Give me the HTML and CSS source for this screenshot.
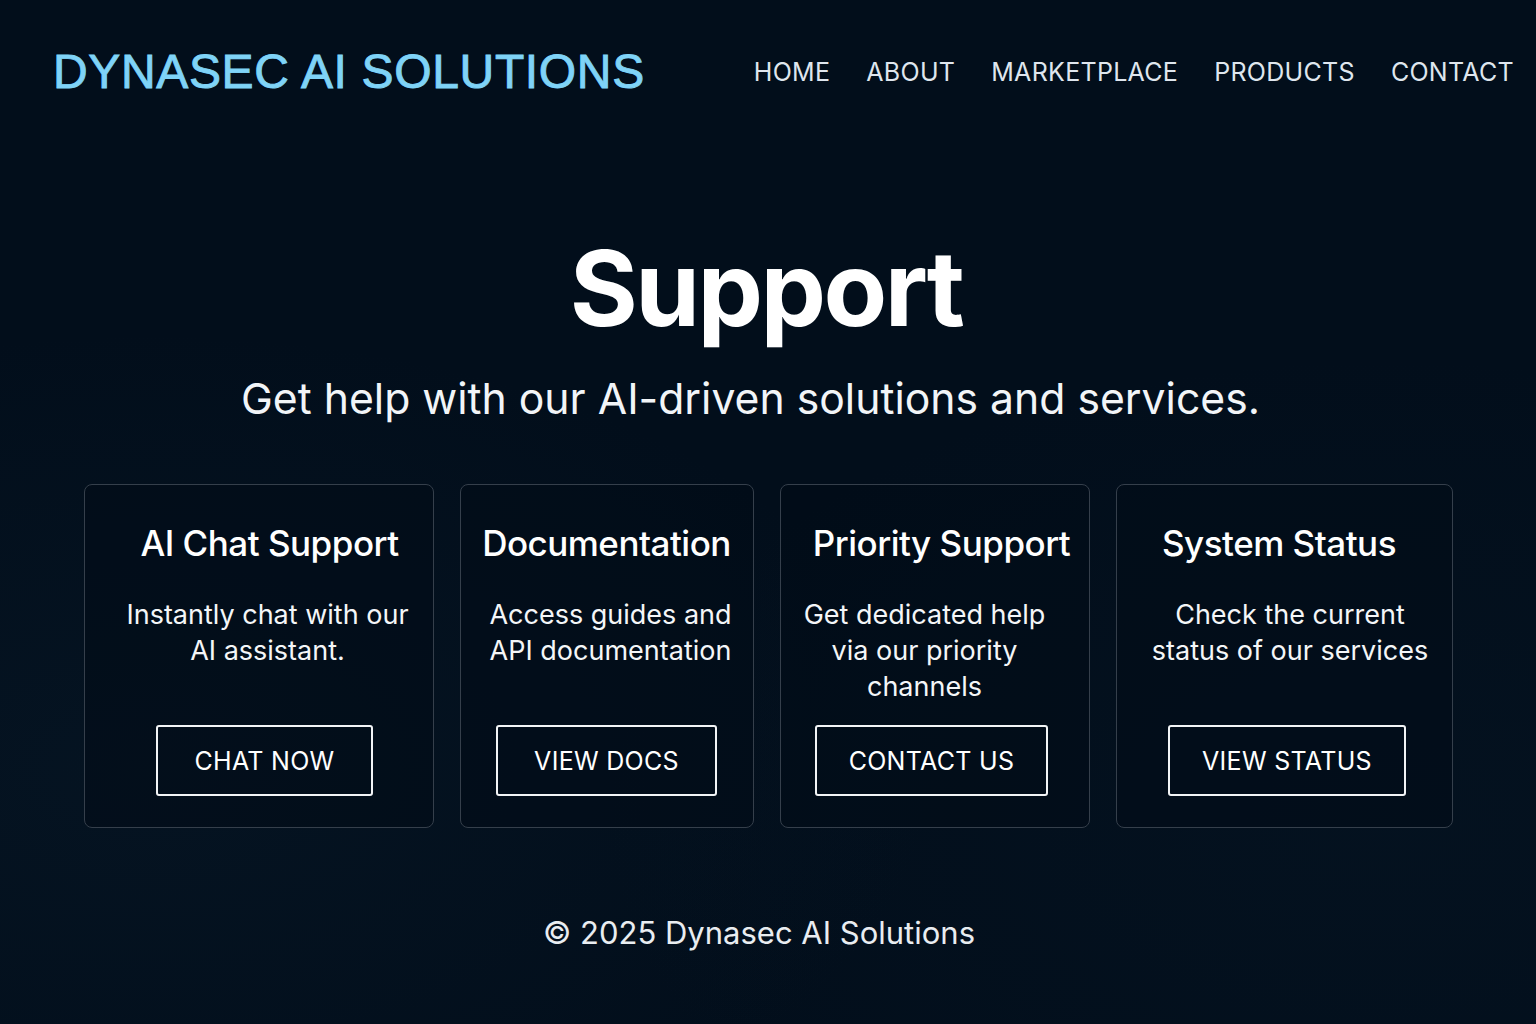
FILE: index.html
```html
<!DOCTYPE html>
<html lang="en">
<head>
<meta charset="utf-8">
<title>Support - Dynasec AI Solutions</title>
<link rel="stylesheet" href="styles.css">
</head>
<body>
<div class="page">
  <header class="site-header">
    <div class="logo">DYNASEC AI SOLUTIONS</div>
    <nav class="nav">
      <a href="#" class="nav-link">HOME</a>
      <a href="#" class="nav-link">ABOUT</a>
      <a href="#" class="nav-link">MARKETPLACE</a>
      <a href="#" class="nav-link">PRODUCTS</a>
      <a href="#" class="nav-link">CONTACT</a>
    </nav>
  </header>

  <main class="main">
    <section class="hero">
      <h1 class="hero-title">Support</h1>
      <p class="hero-sub">Get help with our AI-driven solutions and services.</p>
    </section>

    <section class="cards">
      <div class="card card-chat">
        <h2 class="card-title">AI Chat Support</h2>
        <p class="card-text">Instantly chat with our<br>AI assistant.</p>
        <a href="#" class="btn">CHAT NOW</a>
      </div>
      <div class="card card-docs">
        <h2 class="card-title">Documentation</h2>
        <p class="card-text">Access guides and<br>API documentation</p>
        <a href="#" class="btn">VIEW DOCS</a>
      </div>
      <div class="card card-priority">
        <h2 class="card-title">Priority Support</h2>
        <p class="card-text">Get dedicated help<br>via our priority<br>channels</p>
        <a href="#" class="btn">CONTACT US</a>
      </div>
      <div class="card card-status">
        <h2 class="card-title">System Status</h2>
        <p class="card-text">Check the current<br>status of our services</p>
        <a href="#" class="btn">VIEW STATUS</a>
      </div>
    </section>
  </main>

  <footer class="footer">© 2025 Dynasec AI Solutions</footer>
</div>
</body>
</html>
```
FILE: styles.css
```css
html, body {
  margin: 0;
  padding: 0;
}
body {
  background: #020e1b;
  color: #ffffff;
  font-family: Inter, "Noto Sans", sans-serif;
  min-height: 1024px;
  background-image:
    radial-gradient(ellipse at 10% 75%, rgba(16, 40, 58, 0.22), transparent 40%),
    radial-gradient(ellipse at 90% 80%, rgba(16, 40, 58, 0.14), transparent 40%);
}
.page {
  width: 1536px;
  height: 1024px;
  display: flex;
  flex-direction: column;
}
.site-header {
  display: flex;
  align-items: center;
  justify-content: space-between;
  padding: 44px 22px 0 53px;
  height: 56px;
}
.logo {
  font-family: "Liberation Sans", Arial, sans-serif;
  font-size: 48px;
  font-weight: 400;
  letter-spacing: 0.65px;
  color: #7fd3f7;
  line-height: 1;
  -webkit-text-stroke: 0.9px #7fd3f7;
}
.nav {
  display: flex;
  gap: 36px;
  align-items: center;
}
.nav-link {
  color: #dfe6ee;
  text-decoration: none;
  font-size: 25px;
  letter-spacing: 0.3px;
  line-height: 1;
}
.main {
  display: flex;
  flex-direction: column;
  align-items: center;
}
.hero {
  text-align: center;
  padding-top: 136px;
}
.hero-title {
  margin: 0;
  font-size: 104px;
  font-weight: 700;
  line-height: 1;
  letter-spacing: -2.5px;
  padding-right: 4px;
}
.hero-sub {
  margin: 33px 0 0;
  padding-right: 35px;
  font-size: 42.7px;
  font-weight: 400;
  line-height: 1.2;
  color: #f2f5f8;
}
.cards {
  display: grid;
  grid-template-columns: 350px 294px 310px 337px;
  gap: 26px;
  margin-top: 60px;
}
.card {
  height: 344px;
  box-sizing: border-box;
  border: 1.5px solid #353f4b;
  border-radius: 8px;
  padding: 36px 12px 31px;
  display: flex;
  flex-direction: column;
  align-items: center;
  text-align: center;
  background: rgba(2, 12, 24, 0.6);
}
.card-title {
  margin: 0;
  font-size: 35px;
  font-weight: 500;
  line-height: 44px;
  letter-spacing: -0.5px;
}
.card-text {
  margin: 32px 0 0;
  font-size: 27px;
  line-height: 36px;
  color: #f4f6f8;
}
.card-chat .card-title { margin-left: 22px; }
.card-chat .card-text { margin-left: 18px; }
.card-chat .btn { margin-left: 12px; }
.card-docs .card-text { margin-left: 8px; }
.card-priority .card-title { margin-left: 14px; }
.card-priority .card-text { margin-right: 20px; }
.card-priority .btn { margin-right: 6px; padding: 0 32px; }
.card-status .card-title { margin-right: 10px; }
.card-status .card-text { margin-left: 12px; }
.card-status .btn { margin-left: 6px; padding: 0 32px; }
.btn {
  margin-top: auto;
  height: 71px;
  box-sizing: border-box;
  padding: 0 36px;
  border: 2px solid #f2f4f6;
  border-radius: 3px;
  display: flex;
  align-items: center;
  justify-content: center;
  color: #ffffff;
  text-decoration: none;
  font-size: 25px;
  letter-spacing: 0.3px;
}
.footer {
  text-align: center;
  font-size: 31px;
  color: #e9edf1;
  margin-top: 86px;
  padding-right: 18px;
}
```
